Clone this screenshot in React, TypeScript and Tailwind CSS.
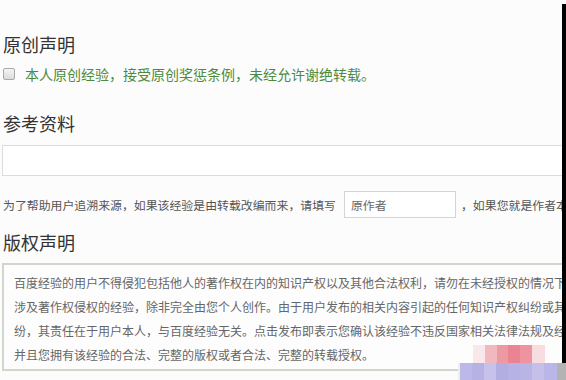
import React from "react";

export default function App() {
  return (
    <div className="relative w-[566px] h-[380px] overflow-hidden bg-[#fcfcfc] font-['Noto_Sans_CJK_SC','Noto_Sans',sans-serif]">
      <div className="w-[640px] pt-[32px] pl-[2px]">
        <h2 className="pl-[1px] text-[18px] leading-[24px] text-[#333]">原创声明</h2>
        <div className="mt-[8px] flex h-[20px] items-center">
          <div className="ml-[1px] h-[12px] w-[12px] shrink-0 rounded-[2px] border border-[#a9a9a9] bg-gradient-to-b from-[#f4f4f4] to-[#dcdcdc]" />
          <span className="ml-[10px] whitespace-nowrap text-[14px] text-[#4e8a3c]">本人原创经验，接受原创奖惩条例，未经允许谢绝转载。</span>
        </div>

        <h2 className="mt-[27px] pl-[1px] text-[18px] leading-[24px] text-[#333]">参考资料</h2>
        <div className="mt-[10px] h-[31px] border border-[#dcdcdc] bg-white" />

        <div className="mt-[15px] flex h-[27px] items-center whitespace-nowrap text-[11.9px] text-[#555]">
          <span className="shrink-0 pl-[1px]">为了帮助用户追溯来源，如果该经验是由转载改编而来，请填写</span>
          <div className="ml-[8px] flex h-[27px] w-[112px] shrink-0 items-center border border-[#d4d4d4] bg-white pl-[6px] text-[#666]">
            原作者
          </div>
          <span className="ml-[5px] shrink-0">，如果您就是作者本人，请填写您的名字</span>
        </div>

        <h2 className="mt-[12px] pl-[1px] text-[18px] leading-[24px] text-[#333]">版权声明</h2>
        <div className="mt-[9px] h-[108px] border-2 border-[#cfd6cb] bg-[#fdfdfd] pl-[10px] pt-[6px] text-[12px] leading-[24px] text-[#666]">
          <p className="whitespace-nowrap">百度经验的用户不得侵犯包括他人的著作权在内的知识产权以及其他合法权利，请勿在未经授权的情况下发布</p>
          <p className="whitespace-nowrap">涉及著作权侵权的经验，除非完全由您个人创作。由于用户发布的相关内容引起的任何知识产权纠纷或其他纠</p>
          <p className="whitespace-nowrap">纷，其责任在于用户本人，与百度经验无关。点击发布即表示您确认该经验不违反国家相关法律法规及经验规范，</p>
          <p className="whitespace-nowrap">并且您拥有该经验的合法、完整的版权或者合法、完整的转载授权。</p>
        </div>
      </div>

      {/* right black edge */}
      <div className="absolute right-0 top-[4px] h-[371px] w-[4px] bg-black" />
      <div className="absolute right-0 top-[363px] h-[17px] w-[9px] bg-[#b3b3b3]" />

      {/* blurred artifacts bottom-right */}
      <div className="absolute left-[473px] top-[345px] flex h-[18px]">
        <div className="h-full w-[12px] bg-[#f9e8ea]" />
        <div className="h-full w-[12px] bg-[#f2b8c0]" />
        <div className="h-full w-[11px] bg-[#ee98a2]" />
        <div className="h-full w-[12px] bg-[#ec8392]" />
        <div className="h-full w-[12px] bg-[#ee94a0]" />
        <div className="h-full w-[13px] bg-[#f8dde0]" />
      </div>
      <div className="absolute left-[458px] top-[363px] flex h-[17px]">
        <div className="h-full w-[2px] bg-[#eef0ee]" />
        <div className="h-full w-[12px] bg-[#bcb8e8]" />
        <div className="h-full w-[12px] bg-[#b6b2e4]" />
        <div className="h-full w-[12px] bg-[#c6c2ec]" />
        <div className="h-full w-[12px] bg-[#b2aee2]" />
        <div className="h-full w-[12px] bg-[#b6b2e6]" />
        <div className="h-full w-[12px] bg-[#b8b4e4]" />
        <div className="h-full w-[12px] bg-[#c4c0ea]" />
        <div className="h-full w-[13px] bg-[#bab6e8]" />
      </div>
    </div>
  );
}
